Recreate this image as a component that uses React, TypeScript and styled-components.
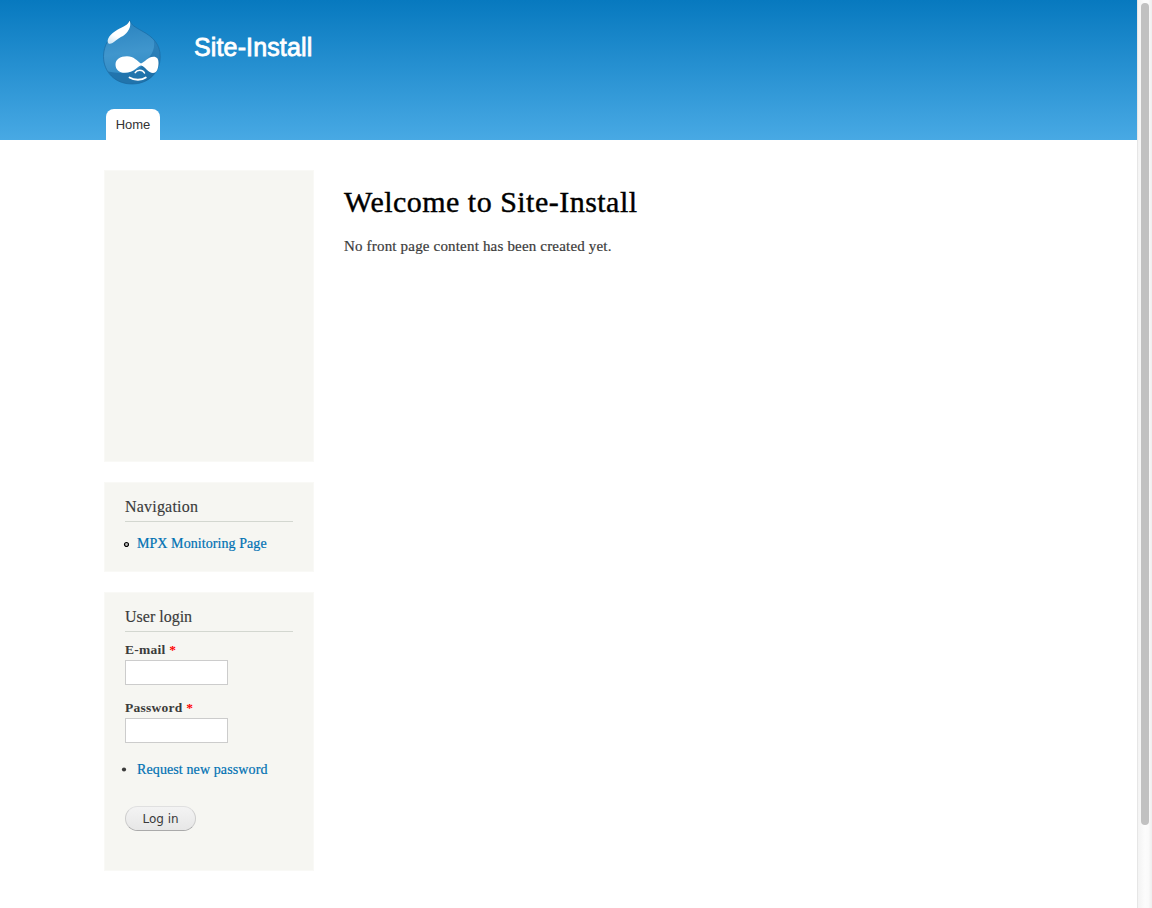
import React from "react";
import styled, { createGlobalStyle } from "styled-components";

const serif = `"Liberation Serif", serif`;
const sans = `"Liberation Sans", sans-serif`;

const GlobalStyle = createGlobalStyle`
  * { box-sizing: border-box; }
  body { margin: 0; background: #fff; color: #3b3b3b; font-family: ${serif}; overflow: hidden; }
`;

const Shell = styled.div`
  display: grid;
  grid-template-columns: 1fr 15px;
  height: 908px;
`;

const Page = styled.div`
  min-width: 0;
`;

const Header = styled.header`
  display: flex;
  flex-direction: column;
  justify-content: space-between;
  height: 140px;
  padding: 20px 0 0 103px;
  background: linear-gradient(#0779bf, #48a9e4);
`;

const Branding = styled.div`
  display: flex;
  align-items: flex-start;
  gap: 33px;
`;

const Logo = styled.svg`
  display: block;
  width: 58px;
  height: 65px;
`;

const SiteName = styled.a`
  margin-top: 12px;
  color: #fff;
  font: 25px/30px ${sans};
  letter-spacing: 0.14px;
  -webkit-text-stroke: 0.8px #fff;
  white-space: nowrap;
`;

const Tab = styled.a`
  align-self: flex-start;
  width: 54px;
  height: 31px;
  margin-left: 3px;
  border-radius: 8px 8px 0 0;
  background: #fff;
  color: #333;
  font: 13px/31px ${sans};
  text-align: center;
`;

const Main = styled.main`
  display: flex;
  align-items: flex-start;
  gap: 30px;
  padding: 30px 0 0 104px;
`;

const Sidebar = styled.aside`
  display: flex;
  flex-direction: column;
  gap: 20px;
  width: 210px;
`;

const Block = styled.section<{ $height: number }>`
  height: ${(p) => p.$height}px;
  padding: 15px 20px 0;
  border: 1px solid #f9f9f6;
  background: #f6f6f2;
`;

const BlockTitle = styled.h2<{ $spacing: number }>`
  height: 24px;
  margin: 0;
  border-bottom: 1px solid #d3d7d0;
  font: 16px/18px ${serif};
  letter-spacing: ${(p) => p.$spacing}px;
  -webkit-text-stroke: 0.15px currentColor;
`;

const LinkRow = styled.div<{ $top: number; $outdent: number }>`
  display: flex;
  align-items: center;
  height: 18px;
  margin: ${(p) => p.$top}px 0 0 ${(p) => -p.$outdent}px;
`;

const Bullet = styled.svg`
  flex: none;
  width: 6px;
  height: 6px;
`;

const TextLink = styled.a<{ $gap: number; $spacing: number }>`
  margin-left: ${(p) => p.$gap}px;
  color: #0071b3;
  font: 14px/18px ${serif};
  letter-spacing: ${(p) => p.$spacing}px;
  -webkit-text-stroke: 0.2px currentColor;
  white-space: nowrap;
`;

const Field = styled.label<{ $top: number; $spacing: number }>`
  display: block;
  margin-top: ${(p) => p.$top}px;
  font: bold 13.5px/18px ${serif};
  letter-spacing: ${(p) => p.$spacing}px;
`;

const Required = styled.span`
  color: #f00;
`;

const Input = styled.input`
  display: block;
  width: 103px;
  height: 25px;
  margin: 1px 0 0;
  padding: 4px;
  border: 1px solid #ccc;
  background: #fff;
  outline: none;
`;

const Submit = styled.button`
  display: block;
  width: 71px;
  height: 25px;
  margin: 27px 0 0;
  padding: 0;
  border: 1px solid #ccc;
  border-top-color: #e0e0e0;
  border-bottom-color: #aaa;
  border-radius: 13px;
  background: linear-gradient(#f3f3f3, #e7e7e7);
  color: #3a3a3a;
  font: 12px/22px "DejaVu Sans", sans-serif;
`;

const Content = styled.article`
  padding-top: 14px;
`;

const Title = styled.h1`
  margin: 0;
  color: #000;
  font: 30px/36px ${serif};
  letter-spacing: 0.48px;
  -webkit-text-stroke: 0.4px currentColor;
  white-space: nowrap;
`;

const Copy = styled.p`
  margin: 16px 0 0;
  font: 15px/20px ${serif};
  letter-spacing: 0.18px;
  -webkit-text-stroke: 0.2px currentColor;
  white-space: nowrap;
`;

const ScrollTrack = styled.div`
  padding: 3px 0 0 3px;
  border-left: 1px solid #e6e6e6;
  background: linear-gradient(90deg, #f3f3f3, #fcfcfc 50%, #fafafa 75%, #eee);
`;

const ScrollThumb = styled.div`
  width: 8px;
  height: 822px;
  border-radius: 4px;
  background: #c1c1c1;
`;

const dropOutline =
  "M26.600 0C28 5 32 7 39 11C50 17 57.200 24 57.200 36.500C57.200 53 45 64 29 64C12 64 .5 52 .5 36.500C.5 25 7 15.500 15 10.500C21 7 25 5.500 26.600 0Z";

function Druplicon() {
  return (
    <Logo viewBox="0 0 58 65" aria-label="Home">
      <defs>
        <linearGradient id="drop" x1="0.4" y1="0" x2="0.5" y2="1">
          <stop offset="0" stopColor="#2a83bf" />
          <stop offset="0.5" stopColor="#4096cd" />
          <stop offset="1" stopColor="#2d88c2" />
        </linearGradient>
        <linearGradient id="shade" x1="0.8" y1="0" x2="0.3" y2="1">
          <stop offset="0" stopColor="#2d82bc" />
          <stop offset="1" stopColor="#2075ae" />
        </linearGradient>
        <linearGradient id="gloss" x1="0.8" y1="0" x2="0.3" y2="1">
          <stop offset="0" stopColor="#fff" />
          <stop offset="0.7" stopColor="#fff" />
          <stop offset="1" stopColor="#d6eaf7" />
        </linearGradient>
        <clipPath id="shape">
          <path d={dropOutline} />
        </clipPath>
      </defs>
      <g clipPath="url(#shape)">
        <rect width="58" height="65" fill="url(#drop)" />
        <path d="M50 17C54 30 47 38 38 44L43 65H58V17Z" fill="url(#shade)" />
        <path d="M5 51.500C16 54 30 54 39 46L56 44L50 65H14Z" fill="#1e70a8" opacity=".85" />
      </g>
      <path d={dropOutline} fill="none" stroke="#17659c" strokeWidth="1" opacity=".6" />
      <path d="M5.500 23.500C2.500 19.500 8 13.500 14 10C20 6.800 25 5 26.700 .5C29 7 24.500 13 20 16C13.500 18.500 9 25.500 5.500 23.500Z" fill="url(#gloss)" />
      <path d="M24 36.300C31 36.300 34 41 38 43.500C42 42 45 36.800 50.500 36.800C54 36.800 55.500 39 55.500 43C55.500 48 54 53 50 53C45.500 53 42 46.500 38 45.500C34 46.500 31 52.800 22 52.800C16 52.800 12.500 49.500 12.500 44.500C12.500 39.500 17 36.300 24 36.300Z" fill="#fff" />
      <path d="M32.200 52.600C34 49.500 39.500 49.300 41.500 53" fill="none" stroke="#fff" strokeWidth="1.500" strokeLinecap="round" />
      <path d="M26.500 57.500C31 60.500 39 60.500 42.800 57.500" fill="none" stroke="#fff" strokeWidth="1.800" strokeLinecap="round" />
    </Logo>
  );
}

export default function App() {
  return (
    <>
      <GlobalStyle />
      <Shell>
        <Page>
          <Header>
            <Branding>
              <Druplicon />
              <SiteName>Site-Install</SiteName>
            </Branding>
            <Tab>Home</Tab>
          </Header>
          <Main>
            <Sidebar>
              <Block $height={292} />
              <Block $height={90}>
                <BlockTitle $spacing={0.2}>Navigation</BlockTitle>
                <LinkRow $top={13} $outdent={2}>
                  <Bullet viewBox="0 0 6 6">
                    <circle cx="3.500" cy="3.500" r="2" fill="#bbb" stroke="#000" strokeWidth="1.200" />
                  </Bullet>
                  <TextLink $gap={8} $spacing={0.07}>MPX Monitoring Page</TextLink>
                </LinkRow>
              </Block>
              <Block $height={279}>
                <BlockTitle $spacing={0}>User login</BlockTitle>
                <Field $top={9} $spacing={0.25}>
                  E-mail <Required>*</Required>
                  <Input type="text" />
                </Field>
                <Field $top={14} $spacing={0.25}>
                  Password <Required>*</Required>
                  <Input type="password" />
                </Field>
                <LinkRow $top={18} $outdent={4}>
                  <Bullet viewBox="0 0 6 6">
                    <circle cx="3" cy="2.500" r="2.100" fill="#3b3b3b" />
                  </Bullet>
                  <TextLink $gap={10} $spacing={0.11}>Request new password</TextLink>
                </LinkRow>
                <Submit type="button">Log in</Submit>
              </Block>
            </Sidebar>
            <Content>
              <Title>Welcome to Site-Install</Title>
              <Copy>No front page content has been created yet.</Copy>
            </Content>
          </Main>
        </Page>
        <ScrollTrack>
          <ScrollThumb />
        </ScrollTrack>
      </Shell>
    </>
  );
}
